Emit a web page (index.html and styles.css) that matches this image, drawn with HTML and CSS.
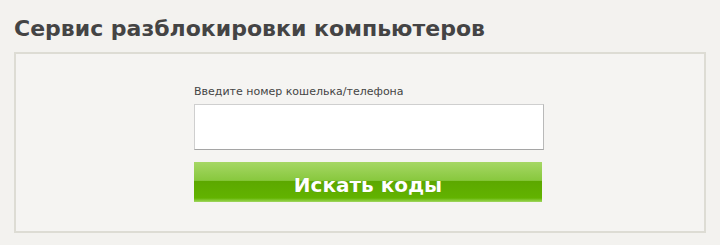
FILE: index.html
```html
<!DOCTYPE html>
<html lang="ru">
<head>
<meta charset="utf-8">
<title>Сервис разблокировки компьютеров</title>
<link rel="stylesheet" href="styles.css">
</head>
<body>
<h1 class="title">Сервис разблокировки компьютеров</h1>
<div class="panel">
  <form class="search-form">
    <label class="field-label" for="wallet">Введите номер кошелька/телефона</label>
    <input class="field-input" id="wallet" type="text">
    <button class="search-button" type="button">Искать коды</button>
  </form>
</div>
</body>
</html>
```
FILE: styles.css
```css
html, body {
  margin: 0;
  padding: 0;
}
body {
  background: #f3f2ef;
  padding: 0 14px;
  font-family: "DejaVu Sans", Verdana, sans-serif;
  color: #444;
}
.title {
  margin: 0;
  padding-top: 15px;
  height: 52px;
  box-sizing: border-box;
  font-size: 22px;
  line-height: 28px;
  font-weight: bold;
  color: #444;
}
.panel {
  border: 2px solid #dddcd4;
  background: #f5f4f2;
  padding: 31px 0 29px 178px;
}
.search-form {
  display: flex;
  flex-direction: column;
  align-items: flex-start;
}
.field-label {
  font-size: 11px;
  line-height: 13px;
  color: #444;
  margin-bottom: 6px;
}
.field-input {
  box-sizing: border-box;
  width: 350px;
  height: 46px;
  margin: 0;
  background: #fff;
  border: 1px solid #cfcfcf;
  border-right-color: #b9b9b9;
  border-bottom-color: #a5a5a5;
  padding: 0 8px;
  font-family: inherit;
  font-size: 14px;
}
.search-button {
  box-sizing: border-box;
  margin-top: 12px;
  width: 348px;
  height: 40px;
  border: 0;
  padding: 6px 0 0;
  background: linear-gradient(to bottom, #a6d765 0%, #88c83e 46%, #5ca800 48%, #62b300 90%, #8ccd3f 97%, #a0d664 100%);
  color: #fff;
  font-family: "DejaVu Sans", Verdana, sans-serif;
  font-weight: bold;
  font-size: 20px;
  line-height: 34px;
  cursor: pointer;
  text-shadow: 0 0 1px rgba(0,0,0,0.15);
}
```
